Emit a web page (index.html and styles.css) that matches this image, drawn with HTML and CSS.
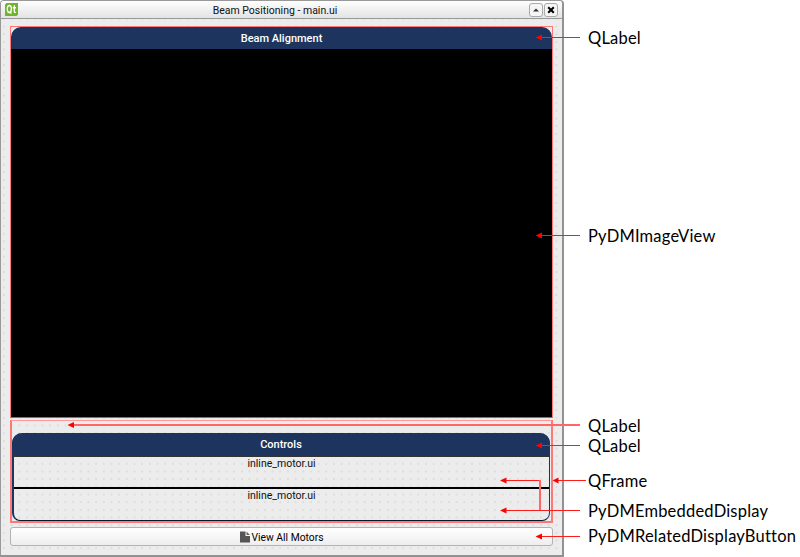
FILE: index.html
```html
<!DOCTYPE html>
<html lang="en">
<head>
<meta charset="utf-8">
<title>Beam Positioning - main.ui</title>
<link rel="stylesheet" href="styles.css">
</head>
<body>
<main class="stage">
  <section class="window">
    <header class="titlebar">
      <svg class="logo" width="13" height="13" viewBox="0 0 13 13"><path d="M1.5 0H13V11.5L11.5 13H0V1.5Z" fill="#6fb52c"/><g fill="none" stroke="#fff" stroke-width="1.35"><path d="M4.3 2.5C2.8 2.5 2.3 3.6 2.3 6s.5 3.5 2 3.5S6.4 8.400 6.400 6 5.800 2.500 4.300 2.500ZM5 9l1.400 1.600M9.300 2.200v6c0 1 .5 1.300 1.700 1.100M7.800 4.700h3.200"/></g></svg>
      <h1 class="title">Beam Positioning - main.ui</h1>
      <span class="winbtn"><svg width="12" height="12" viewBox="0 0 12 12"><path d="M3 7.500L6 4.500 9 7.500Z" fill="#333"/></svg></span>
      <span class="winbtn close"><svg width="12" height="12" viewBox="0 0 12 12"><path d="M3.200 3.200l5.600 5.600M8.800 3.200L3.200 8.800" stroke="#000" stroke-width="2"/></svg></span>
    </header>
    <div class="content">
      <div class="view">
        <h2 class="heading"><span>Beam Alignment</span></h2>
        <div class="image"></div>
      </div>
      <div class="panel">
        <div class="frame">
          <h2 class="heading"><span>Controls</span></h2>
          <div class="embed"><span>inline_motor.ui</span></div>
          <div class="embed second"><span>inline_motor.ui</span></div>
        </div>
      </div>
      <button class="related"><svg width="10" height="12" viewBox="0 0 10 12"><path d="M0 .5h5.500V5H10v6.500H0Z" fill="#555"/><path d="M6.500.5L10 4H6.500Z" fill="#666"/></svg><span>View All Motors</span></button>
    </div>
  </section>
  <aside class="notes">
    <p class="n1">QLabel</p>
    <p class="n2">PyDMImageView</p>
    <p class="n3">QLabel</p>
    <p class="n4">QLabel</p>
    <p class="n5">QFrame</p>
    <p class="n6">PyDMEmbeddedDisplay</p>
    <p class="n7">PyDMRelatedDisplayButton</p>
  </aside>
  <svg class="arrows" width="800" height="557" viewBox="0 0 800 557">
    <g fill="none" stroke="#ff1c1c" stroke-width="1">
      <path d="M541 37.500H580M541 235.500H580M541 445.500H580M558 480.500H586M541 536.500H580M506 510.500H580"/>
      <path d="M73 425H580" stroke="#f66" stroke-width="2"/>
      <path d="M506 480.500H541" />
      <path d="M540 480V510" stroke="#f66" stroke-width="2"/>
    </g>
    <g fill="#f00">
      <path d="M535.500 37.500l6.500-3v6ZM535.500 235.500l6.500-3v6ZM67.500 425l6.500-3v6ZM535.500 445.500l6.500-3v6ZM552.500 480.500l6-3v6ZM500 480.500l6.500-3v6ZM500 510.500l6.500-3v6ZM535.500 536.500l6.500-3v6Z"/>
    </g>
  </svg>
</main>
</body>
</html>
```

FILE: styles.css
```css
* { box-sizing: border-box; }
body { margin: 0; background: #fff; }
h1, h2, p { margin: 0; font-weight: normal; }

.stage {
  position: relative;
  display: flex;
  width: 800px;
  height: 557px;
  overflow: hidden;
  font-family: Roboto, "Liberation Sans", sans-serif;
}

.window {
  display: flex;
  flex-direction: column;
  width: 564px;
  height: 557px;
  border: 1px solid #999;
  border-right: 2px solid #929292;
  border-bottom: 2px solid #929292;
  border-radius: 4px 4px 0 0;
  background: #ececec;
}

.titlebar {
  display: flex;
  align-items: center;
  flex: none;
  height: 18px;
  padding: 0 4px 0 4px;
  border-bottom: 1px solid #999;
  border-radius: 3px 3px 0 0;
  background: linear-gradient(#fefefe, #e3e3e3);
}

.title {
  flex: 1;
  padding: 1px 0 0 3px;
  font-size: 10.5px;
  line-height: 17px;
  text-align: center;
  white-space: nowrap;
  color: #111;
}

.winbtn {
  display: flex;
  width: 14px;
  height: 14px;
  border: 1px solid #aaa;
  border-radius: 3px;
  background: #f5f5f5;
}
.winbtn.close { margin-left: 1px; }

.content {
  display: flex;
  flex-direction: column;
  flex: 1;
  padding: 7px 9px 0;
  background: radial-gradient(circle at 50% 50%, #d0d0d0 .5px, transparent .9px) 6.900px -4px / 7.680px 7.680px;
}

.view {
  height: 392px;
  border: 1px solid #f77;
  border-bottom: 1px solid #777;
}

.heading {
  height: 22px;
  border-radius: 10px 10px 0 0;
  background: #1d355e;
  color: #fff;
  font-size: 11px;
  line-height: 23px;
  text-align: center;
}
.heading span { font-weight: 500; }
.image { height: 368px; background: #000; }

.panel {
  height: 103px;
  margin-top: 2px;
  padding: 12px 1px 1px 0;
  border: 1px solid #f99;
  border-left: 2px solid #f77;
  border-right: 2px solid #f77;
  border-bottom: 2px solid #f77;
}

.frame {
  height: 88px;
  border: 1px solid #1d355e;
  border-left-width: 2px;
  border-top: 0;
  border-bottom: 1px solid #09152b;
  border-radius: 10px 10px 8px 8px;
}
.frame .heading { height: 24px; margin: 0 -1px 0 -2px; border-bottom: 1px solid #333; }

.embed {
  height: 32px;
  border-bottom: 2px solid #000;
  font-size: 10.5px;
  line-height: 13px;
  text-align: center;
  color: #111;
}
.embed.second { height: 31px; border-bottom: 0; }

.related {
  display: flex;
  align-items: center;
  justify-content: center;
  gap: 2px;
  height: 19px;
  margin: 4px 0 0;
  padding: 1px 0 0;
  border: 1px solid #b2b2b2;
  border-radius: 3px;
  background: linear-gradient(#fff, #eee);
  font: 10.300px/17px Roboto, "Liberation Sans", sans-serif;
  color: #000;
}

.notes {
  width: 236px;
  padding: 28px 0 0 24px;
  font-family: Lato, sans-serif;
  font-size: 16.500px;
  letter-spacing: .2px;
  line-height: 20px;
  color: #000;
  white-space: nowrap;
}
.n2 { margin-top: 178px; }
.n3 { margin-top: 170px; }
.n5 { margin-top: 15px; }
.n6 { margin-top: 10px; }
.n7 { margin-top: 5px; }

.arrows { position: absolute; left: 0; top: 0; pointer-events: none; }
```
